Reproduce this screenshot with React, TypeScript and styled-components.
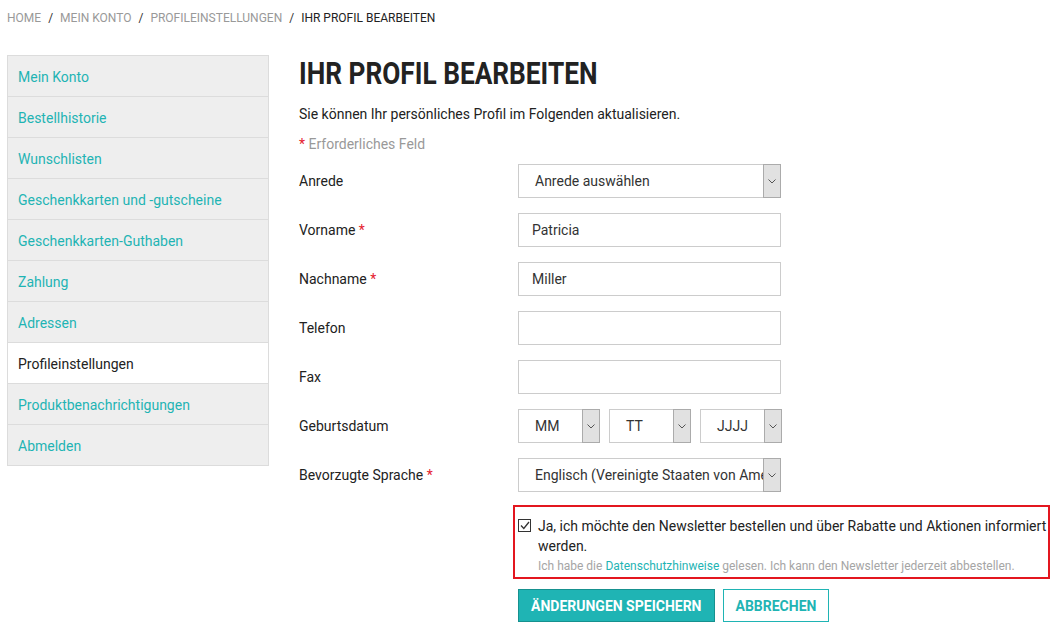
import React from "react"
import styled, { createGlobalStyle } from "styled-components"

const teal = "#1fb4b4"

const GlobalStyle = createGlobalStyle`
  body {
    margin: 0;
    background: #fff;
    font-family: Roboto, "Liberation Sans", Arial, sans-serif;
    color: #222;
  }
`

const Page = styled.div`
  padding: 11px 5px 0 7px;
`

const Breadcrumb = styled.nav`
  display: flex;
  align-items: center;
  font-size: 12px;
  line-height: 14px;
  text-transform: uppercase;
  color: #999;
`

const Crumb = styled.span<{ $current?: boolean }>`
  color: ${p => (p.$current ? "#222" : "#999")};
`

const Sep = styled.span`
  color: #333;
  margin: 0 7px;
`

const Layout = styled.div`
  display: flex;
  gap: 30px;
  margin-top: 30px;
`

const Sidebar = styled.ul`
  list-style: none;
  margin: 0;
  padding: 0;
  width: 260px;
  flex-shrink: 0;
  align-self: flex-start;
  border: 1px solid #dcdcdc;
`

const NavItem = styled.li<{ $active?: boolean }>`
  height: 40px;
  box-sizing: border-box;
  padding: 1px 0 0 10px;
  display: flex;
  align-items: center;
  font-size: 14px;
  background: ${p => (p.$active ? "#fff" : "#eee")};
  color: ${p => (p.$active ? "#222" : teal)};
  & + & {
    height: 41px;
    border-top: 1px solid #dcdcdc;
  }
`

const Main = styled.main`
  flex: 1;
`

const Title = styled.h1`
  margin: 0;
  display: inline-block;
  font-size: 32px;
  line-height: 37px;
  font-weight: 700;
  color: #222;
  transform: scaleX(0.82);
  transform-origin: left center;
  white-space: nowrap;
`

const Intro = styled.p`
  margin: 12px 0 0;
  font-size: 14px;
  line-height: 20px;
`

const Required = styled.p`
  margin: 10px 0 0;
  font-size: 14px;
  line-height: 20px;
  color: #999;
`

const Star = styled.span`
  color: #e5202e;
`

const Form = styled.div`
  margin-top: 10px;
  display: flex;
  flex-direction: column;
  gap: 15px;
`

const Row = styled.div`
  display: flex;
  align-items: center;
`

const Label = styled.label`
  width: 219px;
  font-size: 14px;
  color: #222;
`

const Input = styled.div`
  width: 263px;
  height: 34px;
  box-sizing: border-box;
  border: 1px solid #ccc;
  padding-left: 13px;
  display: flex;
  align-items: center;
  font-size: 14px;
  color: #333;
`

const SelectBox = styled.div<{ $width: number }>`
  width: ${p => p.$width}px;
  height: 34px;
  box-sizing: border-box;
  border: 1px solid #ccc;
  display: flex;
  align-items: stretch;
  font-size: 14px;
  color: #333;
`

const SelectText = styled.span<{ $pad: number }>`
  flex: 1;
  min-width: 0;
  overflow: hidden;
  white-space: nowrap;
  padding-left: ${p => p.$pad}px;
  display: flex;
  align-items: center;
`

const ArrowBox = styled.span`
  width: 16px;
  margin: -1px -1px -1px 0;
  border: 1px solid #ababab;
  background: #e1e1e1;
  display: flex;
  align-items: center;
  justify-content: center;
`

const DateGroup = styled.div`
  display: flex;
  gap: 9px;
`

const Newsletter = styled.div`
  margin: 13px 0 0 214px;
  border: 2px solid #e3161f;
  padding: 9px 0 2px 3px;
  display: flex;
  gap: 7px;
`

const Check = styled.span`
  width: 13px;
  height: 13px;
  box-sizing: border-box;
  border: 1px solid #333;
  flex-shrink: 0;
  margin-top: 3px;
  display: flex;
  align-items: center;
  justify-content: center;
`

const NewsText = styled.div`
  font-size: 14px;
  line-height: 20px;
  color: #222;
`

const Note = styled.div`
  font-size: 12px;
  line-height: 18px;
  color: #a5a5a5;
  margin-top: 1px;
`

const Link = styled.a`
  color: ${teal};
  text-decoration: none;
`

const Actions = styled.div`
  margin: 10px 0 0 219px;
  display: flex;
  gap: 8px;
`

const Button = styled.button<{ $primary?: boolean }>`
  height: 33px;
  box-sizing: border-box;
  padding: 0 12px;
  font-family: Roboto, "Liberation Sans", Arial, sans-serif;
  font-size: 14px;
  font-weight: 700;
  text-transform: uppercase;
  border: 1px solid ${p => (p.$primary ? "#16918f" : teal)};
  background: ${p => (p.$primary ? teal : "#fff")};
  color: ${p => (p.$primary ? "#fff" : teal)};
`

const Chevron = () => (
  <svg width="8" height="5" viewBox="0 0 8 5">
    <polyline points="0.5,0.5 4,4 7.5,0.5" fill="none" stroke="#555" strokeWidth="1" />
  </svg>
)

const Select = ({ width, pad = 16, value }: { width: number; pad?: number; value: string }) => (
  <SelectBox $width={width}>
    <SelectText $pad={pad}>{value}</SelectText>
    <ArrowBox>
      <Chevron />
    </ArrowBox>
  </SelectBox>
)

const navItems = [
  "Mein Konto",
  "Bestellhistorie",
  "Wunschlisten",
  "Geschenkkarten und -gutscheine",
  "Geschenkkarten-Guthaben",
  "Zahlung",
  "Adressen",
  "Profileinstellungen",
  "Produktbenachrichtigungen",
  "Abmelden",
]

const App = () => (
  <Page>
    <GlobalStyle />
    <Breadcrumb>
      <Crumb>Home</Crumb>
      <Sep>/</Sep>
      <Crumb>Mein Konto</Crumb>
      <Sep>/</Sep>
      <Crumb>Profileinstellungen</Crumb>
      <Sep>/</Sep>
      <Crumb $current>Ihr Profil bearbeiten</Crumb>
    </Breadcrumb>
    <Layout>
      <Sidebar>
        {navItems.map(item => (
          <NavItem key={item} $active={item === "Profileinstellungen"}>
            {item}
          </NavItem>
        ))}
      </Sidebar>
      <Main>
        <Title>IHR PROFIL BEARBEITEN</Title>
        <Intro>Sie können Ihr persönliches Profil im Folgenden aktualisieren.</Intro>
        <Required>
          <Star>*</Star> Erforderliches Feld
        </Required>
        <Form>
          <Row>
            <Label>Anrede</Label>
            <Select width={263} value="Anrede auswählen" />
          </Row>
          <Row>
            <Label>
              Vorname <Star>*</Star>
            </Label>
            <Input>Patricia</Input>
          </Row>
          <Row>
            <Label>
              Nachname <Star>*</Star>
            </Label>
            <Input>Miller</Input>
          </Row>
          <Row>
            <Label>Telefon</Label>
            <Input />
          </Row>
          <Row>
            <Label>Fax</Label>
            <Input />
          </Row>
          <Row>
            <Label>Geburtsdatum</Label>
            <DateGroup>
              <Select width={82} value="MM" />
              <Select width={82} value="TT" />
              <Select width={82} value="JJJJ" />
            </DateGroup>
          </Row>
          <Row>
            <Label>
              Bevorzugte Sprache <Star>*</Star>
            </Label>
            <Select width={263} value="Englisch (Vereinigte Staaten von Amerika)" />
          </Row>
        </Form>
        <Newsletter>
          <Check>
            <svg width="10" height="9" viewBox="0 0 10 9">
              <polyline points="1,4.5 3.8,7.5 9,1" fill="none" stroke="#333" strokeWidth="1.3" />
            </svg>
          </Check>
          <NewsText>
            Ja, ich möchte den Newsletter bestellen und über Rabatte und Aktionen informiert werden.
            <Note>
              Ich habe die <Link href="#">Datenschutzhinweise</Link> gelesen. Ich kann den Newsletter
              jederzeit abbestellen.
            </Note>
          </NewsText>
        </Newsletter>
        <Actions>
          <Button $primary>Änderungen speichern</Button>
          <Button>Abbrechen</Button>
        </Actions>
      </Main>
    </Layout>
  </Page>
)

export default App
